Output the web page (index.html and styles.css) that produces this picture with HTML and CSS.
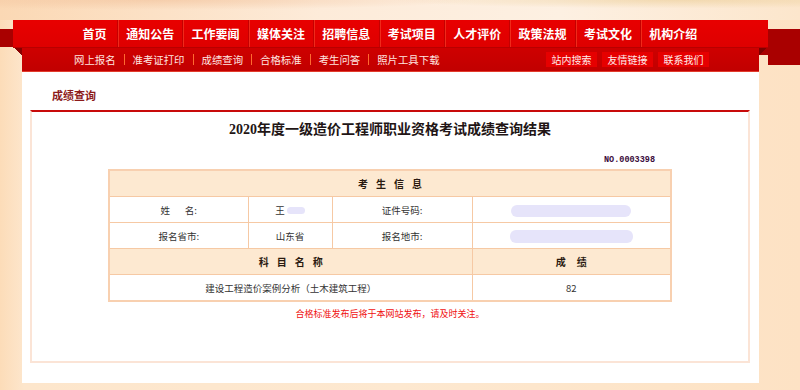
FILE: index.html
```html
<!DOCTYPE html>
<html lang="zh-CN">
<head>
  <meta charset="UTF-8">
  <title>成绩查询</title>
  <link rel="stylesheet" href="styles.css">
</head>
<body>

  <div class="banner"></div>

  <div class="band">
    <div class="tail tail-left"></div>
    <div class="bars">
      <ul class="main-nav">
        <li>首页</li>
        <li>通知公告</li>
        <li>工作要闻</li>
        <li>媒体关注</li>
        <li>招聘信息</li>
        <li>考试项目</li>
        <li>人才评价</li>
        <li>政策法规</li>
        <li>考试文化</li>
        <li>机构介绍</li>
      </ul>
      <div class="sub-row">
        <div class="fold fold-left"></div>
        <div class="sub-nav">
          <ul class="sub-links">
            <li>网上报名</li>
            <li>准考证打印</li>
            <li>成绩查询</li>
            <li>合格标准</li>
            <li>考生问答</li>
            <li>照片工具下载</li>
          </ul>
          <div class="sub-btns">
            <span class="sub-btn">站内搜索</span>
            <span class="sub-btn">友情链接</span>
            <span class="sub-btn">联系我们</span>
          </div>
        </div>
        <div class="fold fold-right"></div>
      </div>
    </div>
    <div class="tail tail-right"></div>
  </div>

  <div class="page">
    <h3 class="page-title">成绩查询</h3>

    <div class="result-box">
      <h1 class="result-title">2020年度一级造价工程师职业资格考试成绩查询结果</h1>
      <p class="result-no">NO.0003398</p>

      <table class="score-table">
        <colgroup>
          <col style="width:139px">
          <col style="width:84px">
          <col style="width:140px">
          <col style="width:199px">
        </colgroup>
        <tr class="head">
          <td colspan="4" class="spaced">考生信息</td>
        </tr>
        <tr>
          <td>姓&nbsp;&nbsp;&nbsp;&nbsp;&nbsp;&nbsp;&nbsp;名:</td>
          <td>王<span class="blur blur-short"></span></td>
          <td>证件号码:</td>
          <td><span class="blur blur-long"></span></td>
        </tr>
        <tr>
          <td>报名省市:</td>
          <td>山东省</td>
          <td>报名地市:</td>
          <td><span class="blur blur-long2"></span></td>
        </tr>
        <tr class="head">
          <td colspan="3" class="spaced">科目名称</td>
          <td class="spaced wide">成绩</td>
        </tr>
        <tr>
          <td colspan="3">建设工程造价案例分析（土木建筑工程）</td>
          <td>82</td>
        </tr>
      </table>

      <p class="notice">合格标准发布后将于本网站发布，请及时关注。</p>
    </div>
  </div>

</body>
</html>
```

FILE: styles.css
```css
body {
  margin: 0;
  font-family: "Noto Sans CJK SC", "Liberation Sans", sans-serif;
  background: linear-gradient(to right, #fcdcb8 0%, #fde6cc 3%, #fde8d0 50%, #fde2c4 100%);
  height: 390px;
  overflow: hidden;
}

ul {
  list-style: none;
  margin: 0;
  padding: 0;
}

.banner {
  height: 20px;
  background:
    radial-gradient(ellipse at 20% 0%, rgba(240, 190, 150, 0.55), rgba(255, 255, 255, 0) 35%),
    radial-gradient(ellipse at 85% 0%, rgba(235, 205, 150, 0.6), rgba(255, 255, 255, 0) 30%),
    linear-gradient(to right, #fbd8b4, #fdebd9 40%, #fdf0e2 70%, #fce6cc);
}

/* red ribbon */
.band {
  display: flex;
}

.tail {
  background-color: #a90000;
  margin-top: 9px;
}

.tail-left {
  width: 13px;
  height: 18px;
}

.tail-right {
  flex: 1;
  height: 36px;
}

.bars {
  width: 755px;
}

.main-nav {
  display: flex;
  height: 27px;
  padding-left: 59px;
  background: linear-gradient(#e80000, #de0000);
  box-shadow: 0 1px 0 #b80000;
  position: relative;
}

.main-nav li {
  flex: 0 0 65.4px;
  box-sizing: border-box;
  text-align: center;
  line-height: 27px;
  font-size: 12px;
  font-weight: bold;
  color: #fff;
  border-left: 1px solid #c40000;
  box-shadow: inset 1px 0 0 #f02a1a;
}

.main-nav li:first-child {
  flex-basis: 45px;
  border-left: none;
  box-shadow: none;
}

.main-nav li:last-child {
  box-shadow: inset 1px 0 0 #f02a1a;
}

.sub-row {
  display: flex;
  height: 25px;
}

.fold {
  width: 9px;
  height: 8px;
}

.fold-left {
  background: linear-gradient(to top right, rgba(0, 0, 0, 0) 50%, #8a0000 50%);
}

.fold-right {
  background: linear-gradient(to top left, #a90000 50%, #7e0000 50%);
}

.sub-nav {
  flex: 1;
  display: flex;
  align-items: center;
  justify-content: space-between;
  padding: 0 50px 0 52px;
  background: linear-gradient(#cf0000, #c10000);
  border-bottom: 1px solid #e23c2c;
  box-sizing: border-box;
}

.sub-links {
  display: flex;
  align-items: center;
}

.sub-links li {
  font-size: 10.4px;
  color: #ffe6e0;
  display: flex;
  align-items: center;
}

.sub-links li + li::before {
  content: "";
  display: inline-block;
  width: 1px;
  height: 11px;
  background-color: #ff6a30;
  margin: 0 8px;
}

.sub-btns {
  display: flex;
  gap: 5px;
}

.sub-btn {
  display: block;
  width: 51px;
  height: 15px;
  line-height: 15px;
  text-align: center;
  font-size: 10px;
  color: #ffecec;
  background-color: #e60000;
}

/* white page */
.page {
  margin-left: 22px;
  width: 737px;
  height: 311px;
  background-color: #fff;
  box-sizing: border-box;
  padding: 0 9px 0 8px;
}

.page-title {
  margin: 0;
  height: 38px;
  box-sizing: border-box;
  padding: 14px 0 0 22px;
  line-height: 18px;
  font-size: 11px;
  font-weight: bold;
  color: #8c1a1a;
}

.result-box {
  height: 253px;
  box-sizing: border-box;
  border: 2px solid #fbe4d6;
  border-top: 2px solid #c80a0a;
  text-align: center;
}

.result-title {
  margin: 0;
  padding-top: 8px;
  line-height: 20px;
  font-family: "Liberation Serif", "Noto Sans CJK SC", serif;
  font-size: 14px;
  font-weight: bold;
  color: #221515;
}

.result-no {
  width: 562px;
  margin: 15px auto 0;
  padding-right: 16px;
  box-sizing: border-box;
  text-align: right;
  font-family: "Liberation Mono", monospace;
  font-size: 8.5px;
  font-weight: bold;
  line-height: 10px;
  color: #3a0a3a;
}

.score-table {
  width: 562px;
  margin: 4px auto 0;
  border-collapse: collapse;
  table-layout: fixed;
  border: 2px solid #f8d0b0;
}

.score-table td {
  height: 25px;
  padding: 0;
  border: 1px solid #f6c9a4;
  font-size: 9.5px;
  color: #333;
  text-align: center;
  vertical-align: middle;
}

.score-table .head td {
  background-color: #fde9d1;
}

.score-table .spaced {
  font-size: 10px;
  font-weight: bold;
  color: #2a1a10;
  letter-spacing: 8px;
  padding-left: 8px;
}

.score-table .spaced.wide {
  letter-spacing: 11px;
  padding-left: 11px;
}

.blur {
  display: inline-block;
  vertical-align: middle;
  background-color: #e6e4fa;
  border-radius: 6px;
}

.blur-short {
  width: 18px;
  height: 7px;
  margin-left: 2px;
}

.blur-long {
  width: 120px;
  height: 12px;
}

.blur-long2 {
  width: 123px;
  height: 13px;
}

.notice {
  margin: 6px 0 0;
  line-height: 12px;
  font-size: 9px;
  color: #f01010;
}
```
